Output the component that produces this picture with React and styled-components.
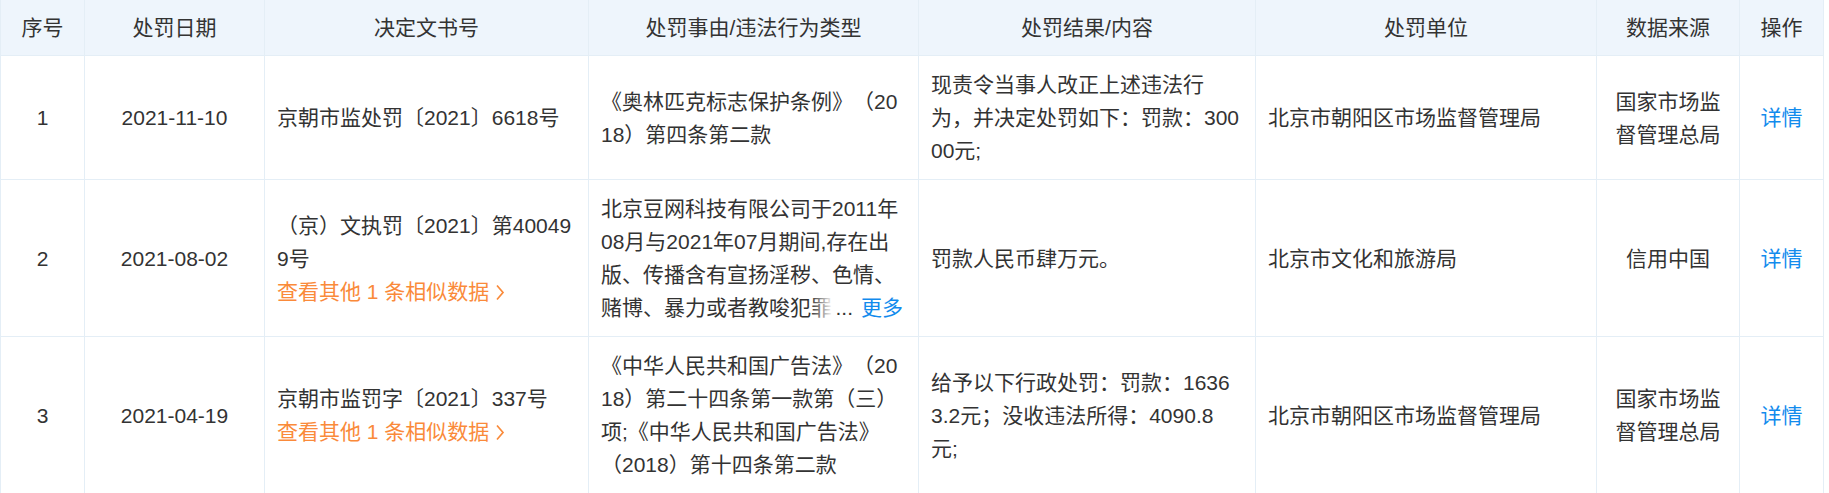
import React from "react";
import styled, { createGlobalStyle } from "styled-components";

const GlobalStyle = createGlobalStyle`
  body {
    margin: 0;
    background: #fff;
    font-family: "Liberation Sans", "Noto Sans CJK SC", sans-serif;
    color: #333;
  }
`;

const Table = styled.table`
  width: 1824px;
  table-layout: fixed;
  border-collapse: separate;
  border-spacing: 0;
  border-left: 1px solid #e4eef6;
  font-size: 21px;
  line-height: 33px;
  text-spacing-trim: space-all;
`;

const HeadCell = styled.th`
  box-sizing: border-box;
  padding: 11px 6px;
  background: #eef5fc;
  border-right: 1px solid #e4eef6;
  border-bottom: 1px solid #e4eef6;
  font-weight: 400;
  text-align: center;
  white-space: nowrap;
`;

const Cell = styled.td`
  box-sizing: border-box;
  padding: ${(p) => (p.$align === "center" ? "12px 12px" : "12px 15px 12px 12px")};
  border-right: 1px solid #e4eef6;
  border-bottom: 1px solid #e4eef6;
  text-align: ${(p) => p.$align || "left"};
  vertical-align: middle;
  word-break: break-all;
`;

const Link = styled.a`
  color: #128bed;
  text-decoration: none;
  cursor: pointer;
`;

const Similar = styled.a`
  display: block;
  color: #fa8a3a;
  text-decoration: none;
  cursor: pointer;
  white-space: nowrap;

  svg {
    margin-left: 6px;
    vertical-align: -2px;
  }
`;

const Clamp = styled.div`
  position: relative;
  max-height: 132px;
  overflow: hidden;
`;

const More = styled.span`
  position: absolute;
  right: 0;
  bottom: 0;
  padding-left: 24px;
  background: linear-gradient(to right, rgba(255, 255, 255, 0), #fff 22px);

  ${Link} {
    margin-left: 8px;
  }
`;

const widths = [84, 180, 324, 330, 337, 341, 143, 84];
const heads = ["序号", "处罚日期", "决定文书号", "处罚事由/违法行为类型", "处罚结果/内容", "处罚单位", "数据来源", "操作"];

const rows = [
  {
    no: 1,
    date: "2021-11-10",
    doc: "京朝市监处罚〔2021〕6618号",
    similar: 0,
    reason: "《奥林匹克标志保护条例》（2018）第四条第二款",
    result: "现责令当事人改正上述违法行为，并决定处罚如下：罚款：30000元;",
    org: "北京市朝阳区市场监督管理局",
    source: "国家市场监督管理总局",
  },
  {
    no: 2,
    date: "2021-08-02",
    doc: "（京）文执罚〔2021〕第400499号",
    similar: 1,
    reason: "北京豆网科技有限公司于2011年08月与2021年07月期间,存在出版、传播含有宣扬淫秽、色情、赌博、暴力或者教唆犯罪",
    clamp: true,
    result: "罚款人民币肆万元。",
    org: "北京市文化和旅游局",
    source: "信用中国",
  },
  {
    no: 3,
    date: "2021-04-19",
    doc: "京朝市监罚字〔2021〕337号",
    similar: 1,
    reason: "《中华人民共和国广告法》（2018）第二十四条第一款第（三）项;《中华人民共和国广告法》（2018）第十四条第二款",
    result: "给予以下行政处罚：罚款：16363.2元；没收违法所得：4090.8元;",
    org: "北京市朝阳区市场监督管理局",
    source: "国家市场监督管理总局",
  },
];

function Chevron() {
  return (
    <svg width="10" height="17" viewBox="0 0 10 17" fill="none">
      <path d="M2 1.5 L8 8.5 L2 15.5" stroke="currentColor" strokeWidth="1.7" />
    </svg>
  );
}

function App() {
  return (
    <>
      <GlobalStyle />
      <Table>
        <colgroup>
          {widths.map((w, i) => (
            <col key={i} style={{ width: w }} />
          ))}
        </colgroup>
        <thead>
          <tr>
            {heads.map((h) => (
              <HeadCell key={h}>{h}</HeadCell>
            ))}
          </tr>
        </thead>
        <tbody>
          {rows.map((r) => (
            <tr key={r.no}>
              <Cell $align="center">{r.no}</Cell>
              <Cell $align="center">{r.date}</Cell>
              <Cell>
                {r.doc}
                {r.similar > 0 && (
                  <Similar>
                    查看其他 {r.similar} 条相似数据
                    <Chevron />
                  </Similar>
                )}
              </Cell>
              <Cell>
                {r.clamp ? (
                  <Clamp>
                    {r.reason}
                    <More>
                      ...<Link>更多</Link>
                    </More>
                  </Clamp>
                ) : (
                  r.reason
                )}
              </Cell>
              <Cell>{r.result}</Cell>
              <Cell>{r.org}</Cell>
              <Cell $align="center">{r.source}</Cell>
              <Cell $align="center">
                <Link>详情</Link>
              </Cell>
            </tr>
          ))}
        </tbody>
      </Table>
    </>
  );
}

export default App;
